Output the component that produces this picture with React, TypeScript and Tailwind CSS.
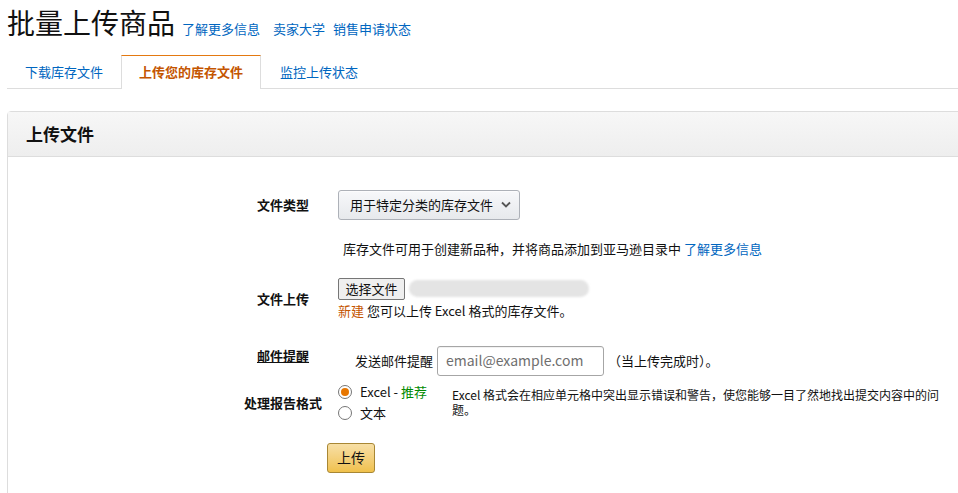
import React from "react"

const font = "font-['Noto_Sans_CJK_SC','Noto_Sans',sans-serif]"

function Radio({ checked }: { checked?: boolean }) {
  return (
    <span className="flex h-[14px] w-[14px] items-center justify-center rounded-full border border-[#767676] bg-white">
      {checked && <span className="h-[8px] w-[8px] rounded-full bg-[#e77600]" />}
    </span>
  )
}

export default function App() {
  return (
    <div className={`h-[493px] w-[958px] overflow-hidden bg-white text-[#111] ${font}`}>
      {/* Title */}
      <div className="flex items-baseline pl-[7px] pt-[6px]">
        <h1 className="text-[28px] leading-[32px] font-normal text-[#111]">批量上传商品</h1>
        <a className="ml-[7px] text-[13px] text-[#0066c0]">了解更多信息</a>
        <a className="ml-[13px] text-[13px] text-[#0066c0]">卖家大学</a>
        <a className="ml-[8px] text-[13px] text-[#0066c0]">销售申请状态</a>
      </div>

      {/* Tabs */}
      <div className="ml-[7px] mt-[16px] flex border-b border-[#dddddd]">
        <div className="-mb-px flex h-[34px] items-center border-x border-t border-transparent px-[17px] text-[13px] text-[#0066c0]">
          下载库存文件
        </div>
        <div className="-mb-px flex h-[34px] items-center border-x border-t border-x-[#dddddd] border-t-[#e47911] bg-white px-[17px] text-[13px] font-bold text-[#c45500]">
          上传您的库存文件
        </div>
        <div className="-mb-px flex h-[34px] items-center border-x border-t border-transparent px-[18px] text-[13px] text-[#0066c0]">
          监控上传状态
        </div>
      </div>

      {/* Panel */}
      <div className="ml-[7px] mt-[22px] w-[1000px] rounded-tl border border-[#dddddd]">
        <div className="flex h-[45px] items-center border-b border-[#dddddd] bg-gradient-to-b from-[#f7f7f7] to-[#eeeeee] pl-[18px]">
          <h2 className="text-[17px] font-bold">上传文件</h2>
        </div>

        <div className="h-[400px] text-[13px]">
          {/* File type */}
          <div className="mt-[33px] flex items-center">
            <div className="ml-[235px] w-[80px] text-center font-bold">文件类型</div>
            <div className="ml-[15px] flex h-[30px] w-[182px] items-center justify-between rounded-[3px] border border-[#adb1b8] bg-gradient-to-b from-[#f7f8fa] to-[#e7e9ec] pl-[11px] pr-[8px] shadow-[0_1px_0_rgba(255,255,255,0.6)_inset]">
              <span>用于特定分类的库存文件</span>
              <svg width="10" height="7" viewBox="0 0 10 7" fill="none">
                <path d="M1 1.5 5 5.5 9 1.5" stroke="#555" strokeWidth="1.8" />
              </svg>
            </div>
          </div>

          <div className="mt-[20px] flex">
            <div className="ml-[335px] leading-[18px]">
              库存文件可用于创建新品种，并将商品添加到亚马逊目录中 <a className="text-[#0066c0]">了解更多信息</a>
            </div>
          </div>

          {/* File upload */}
          <div className="mt-[20px] flex items-center">
            <div className="ml-[235px] w-[80px] pt-[1px] text-center font-bold">文件上传</div>
            <div className="ml-[15px]">
              <div className="flex h-[22px] items-center">
                <button className="h-[22px] w-[67px] rounded-[2px] border border-[#767676] bg-[#efefef] text-[13px] leading-[20px]">
                  选择文件
                </button>
                <div className="ml-[4px] h-[17px] w-[180px] rounded-full bg-[#e4e4e4] blur-[1px]" />
              </div>
              <div className="mt-[2px] leading-[18px]">
                <span className="text-[#c45500]">新建</span> 您可以上传 Excel 格式的库存文件。
              </div>
            </div>
          </div>

          {/* Email */}
          <div className="mt-[26px] flex items-start">
            <div className="ml-[235px] mt-[1px] w-[80px] text-center font-bold leading-[18px] underline">邮件提醒</div>
            <div className="ml-[15px] flex items-center pl-[17px]">
              <span>发送邮件提醒</span>
              <div className="ml-[4px] flex h-[30px] w-[167px] items-center rounded-[3px] border border-[#a6a6a6] pl-[8px] text-[14px] text-[#6f6f6f] shadow-[0_1px_0_rgba(0,0,0,0.05)_inset]">
                email@example.com
              </div>
              <span className="ml-[4px]">（当上传完成时）。</span>
            </div>
          </div>

          {/* Report format */}
          <div className="mt-[6px] flex items-center">
            <div className="ml-[235px] w-[80px] text-center font-bold">处理报告格式</div>
            <div className="ml-[15px] flex items-start">
              <div className="w-[114px]">
                <div className="flex h-[21px] items-center">
                  <Radio checked />
                  <span className="ml-[8px]">
                    Excel - <span className="text-[#008a00]">推荐</span>
                  </span>
                </div>
                <div className="flex h-[21px] items-center">
                  <Radio />
                  <span className="ml-[8px]">文本</span>
                </div>
              </div>
              <div className="mt-[5px] text-[12px] leading-[15px]">
                <div className="whitespace-nowrap">
                  Excel 格式会在相应单元格中突出显示错误和警告，使您能够一目了然地找出提交内容中的问
                </div>
                <div>题。</div>
              </div>
            </div>
          </div>

          {/* Upload button */}
          <div className="mt-[19px] flex">
            <button className="ml-[319px] h-[30px] w-[48px] rounded-[3px] border border-[#a88734] bg-gradient-to-b from-[#f7dfa5] to-[#f0c14b] text-[14px] text-[#111]">
              上传
            </button>
          </div>
        </div>
      </div>
    </div>
  )
}
